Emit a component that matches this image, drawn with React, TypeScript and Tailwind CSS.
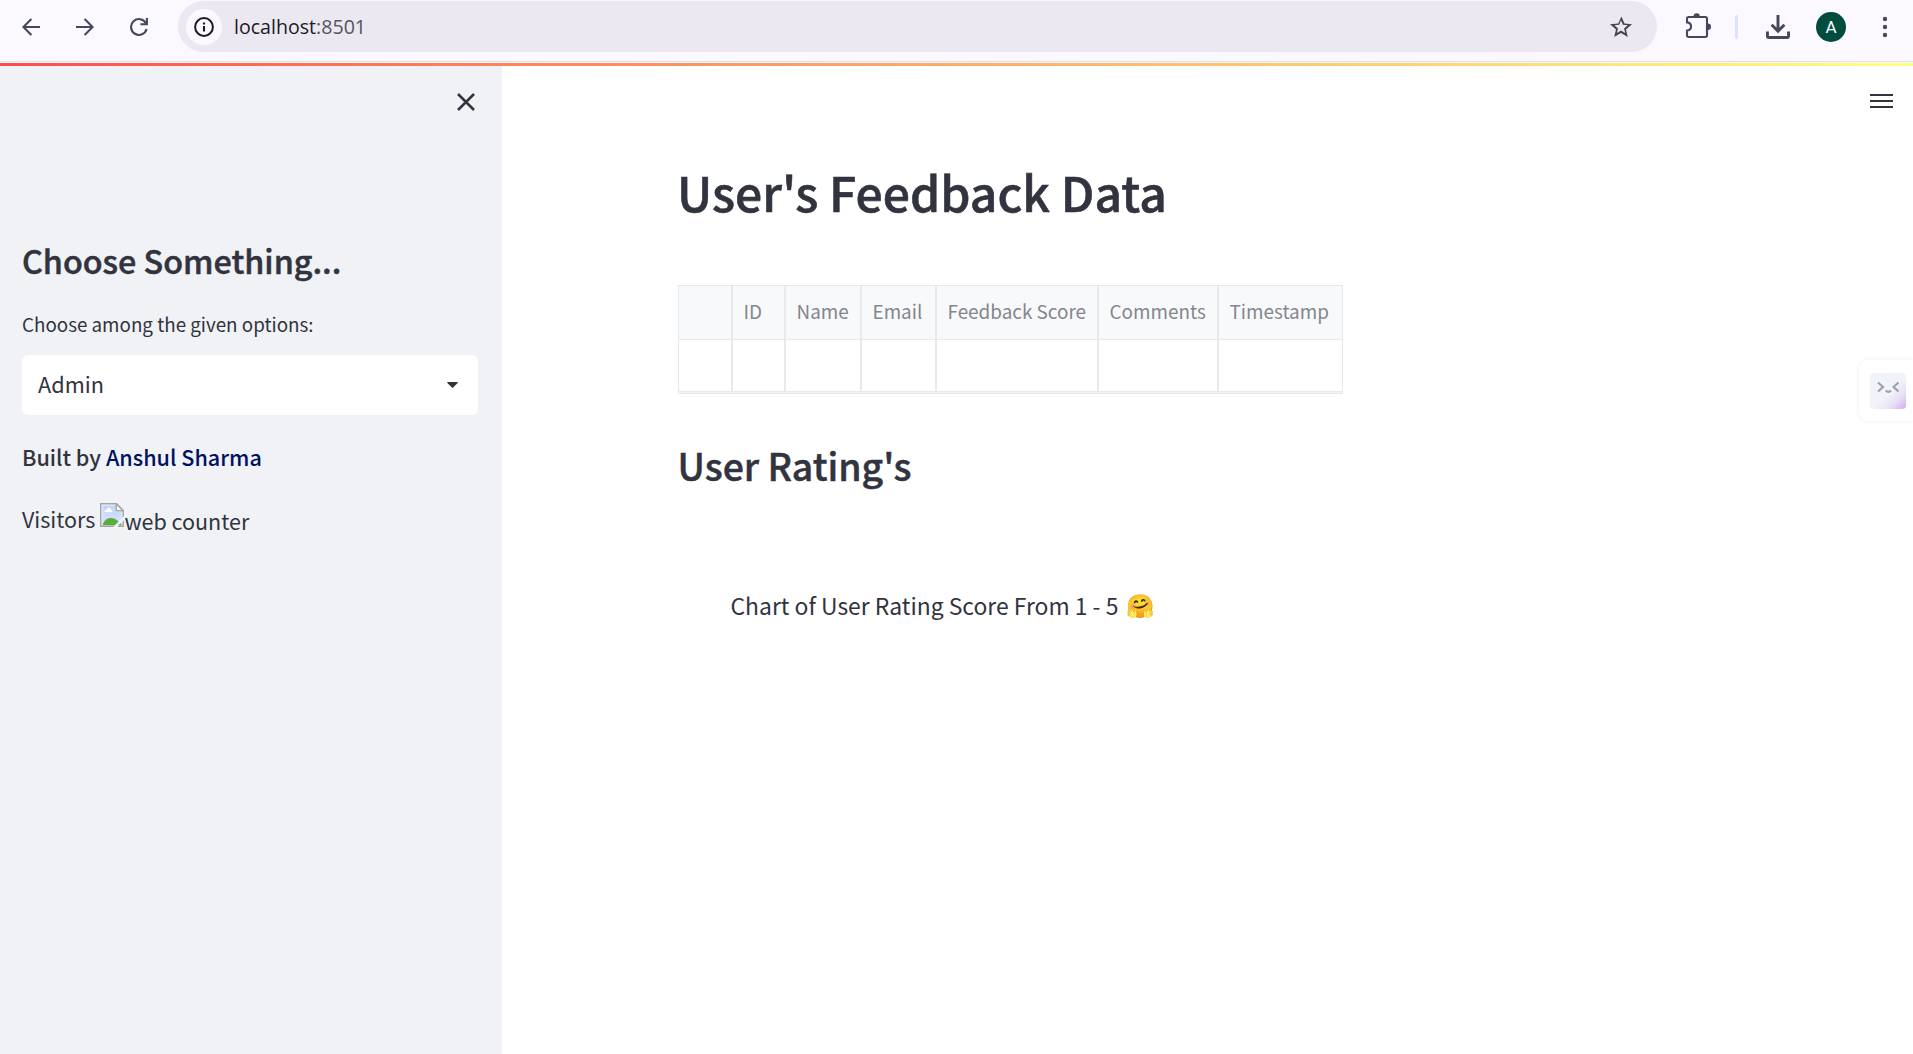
import type { ReactNode } from "react";

const INK = "#46475a";

function BackIcon() {
  return (
    <svg width="18" height="18" viewBox="0 0 18 18" fill="none" stroke={INK} strokeWidth="2.1">
      <path d="M18 9H1.6M9.4 .9 1.4 9l8 8.1" />
    </svg>
  );
}

function ForwardIcon() {
  return (
    <svg width="18" height="18" viewBox="0 0 18 18" fill="none" stroke={INK} strokeWidth="2.1">
      <path d="M0 9h16.4M8.6.9l8 8.1-8 8.1" />
    </svg>
  );
}

function ReloadIcon() {
  return (
    <svg width="18" height="18" viewBox="0 0 18 18" fill="none" stroke={INK} strokeWidth="2.1">
      <path d="M16.6 11a7.9 7.9 0 1 1-.6-5.6" />
      <path d="M16.9 0v6.3h-6.5" />
    </svg>
  );
}

function InfoIcon() {
  return (
    <svg width="20" height="20" viewBox="0 0 20 20" fill="none" stroke="#1d1b22">
      <circle cx="10" cy="10" r="8.9" strokeWidth="2" />
      <path d="M10 9v5.4M10 5.4v2.1" strokeWidth="2.1" />
    </svg>
  );
}

function StarIcon() {
  return (
    <svg width="24" height="24" viewBox="0 0 24 24" fill="#46464c">
      <path d="M23 9.24l-7.5-.65L12.4 1.6 9.3 8.6 1 9.24l6 5.15L5.2 22l6.8-4.1L18.8 22l-1.8-7.61zM12 15.6l-4.1 2.5 1.1-4.7-3.6-3.15 4.8-.4L12 5.4l1.9 4.45 4.8.4-3.6 3.15 1.1 4.7z" />
    </svg>
  );
}

function ExtensionIcon() {
  return (
    <svg width="26" height="26" viewBox="0 0 26 26">
      <path
        d="M3 4h17.3q1.7 0 1.7 1.7v16.6q0 1.7-1.7 1.7H3.7Q2 24 2 22.3V17.6c5.4-.6 5.4-7.6 0-8.2V5.7Q2 4 3.7 4z"
        fill="none"
        stroke={INK}
        strokeWidth="2.1"
      />
      <path d="M8.6 3.4a3.1 3.1 0 0 1 6.2 0zM22.8 10.6a3.2 3.2 0 0 1 0 6.4z" fill={INK} />
    </svg>
  );
}

function DownloadIcon() {
  return (
    <svg width="24" height="24" viewBox="0 0 24 24" fill="none" stroke={INK} strokeWidth="2.9">
      <path d="M12 0v16M5.6 9.7l6.4 6.4 6.4-6.4" />
      <path d="M1.45 16.5v4.6q0 1.45 1.45 1.45h18.2q1.45 0 1.45-1.45v-4.6" />
    </svg>
  );
}

function MoreIcon() {
  return (
    <svg width="6" height="22" viewBox="0 0 6 22" fill={INK}>
      <circle cx="3" cy="3" r="2.2" />
      <circle cx="3" cy="11" r="2.2" />
      <circle cx="3" cy="19" r="2.2" />
    </svg>
  );
}

function BrokenImageIcon() {
  return (
    <svg width="24" height="24" viewBox="0 0 24 24">
      <defs>
        <linearGradient id="sky" x1="0" y1="0" x2="0" y2="1">
          <stop offset="0" stopColor="#c3d5f7" />
          <stop offset="1" stopColor="#d6e3fb" />
        </linearGradient>
      </defs>
      <path d="M.75.75H16.5L23.25 7.5V23.25H.75z" fill="#f4f6fb" stroke="#a3a5a8" strokeWidth="1.5" />
      <path d="M2.5 2.5h13v6.5H21.5v12.5H2.5z" fill="url(#sky)" />
      <path d="M4.5 9c0-2 1.5-2.5 2.3-2.3C7.2 4 10.5 4 10.7 6.5 12 6.5 12.6 8 12 9z" fill="#fff" />
      <path d="M2.5 22.2c1.5-5 4.5-7.2 8.2-7.2 2.5 0 4.5.7 6 2l4.8 4v1.2z" fill="#5aad3c" />
      <path d="M16.2.75V7.8h7z" fill="#fff" stroke="#a3a5a8" strokeWidth="1.5" />
      <path d="M24 13v4.4L18 22.4V24H13.2z" fill="#f0f2f6" />
    </svg>
  );
}

function AssistantFace() {
  return (
    <svg width="36" height="36" viewBox="0 0 36 36" fill="none" stroke="#9ea1ac" strokeWidth="2.2">
      <path d="M8 9.5l5 4.5-5 4.5M28.500 9.5l-5 4.5 5 4.5" />
      <path d="M15.8 17.5q2.6 2.7 5.2 0" />
    </svg>
  );
}

function BrowserBar() {
  return (
    <header className="flex h-[63px] shrink-0 flex-col bg-[#fbf8ff]">
      <div className="flex h-[61px] items-start pt-px">
        <div className="flex h-[52px] w-[178px] items-center gap-9 pl-[22px]">
          <BackIcon />
          <ForwardIcon />
          <ReloadIcon />
        </div>
        <div className="flex h-[51px] w-[1479px] items-center rounded-full bg-[#ebe8f2] pr-[24px] pl-[8px]">
          <div className="flex size-[36px] items-center justify-center rounded-full bg-[#fbf8ff]">
            <InfoIcon />
          </div>
          <div className="ml-[12px] flex-1 font-['Open_Sans',sans-serif] text-[19.6px] leading-[26px] whitespace-nowrap text-[#1d1b22]">
            localhost<span className="text-[#56545c]">:8501</span>
          </div>
          <StarIcon />
        </div>
        <div className="flex h-[52px] flex-1 items-center">
          <div className="ml-[28px] flex -translate-y-px">
            <ExtensionIcon />
          </div>
          <div className="ml-[24px] h-[24px] w-[3px] rounded-full bg-[#dfe0ff]" />
          <div className="ml-[28px]">
            <DownloadIcon />
          </div>
          <div className="ml-[26px] flex size-[30px] items-center justify-center rounded-full bg-[#004d40] font-['Roboto',sans-serif] text-[17px] leading-none text-white">
            A
          </div>
          <div className="ml-[36px]">
            <MoreIcon />
          </div>
        </div>
      </div>
      <div className="h-px bg-[#dfdfea]" />
      <div className="h-px bg-[#fbfaff]" />
    </header>
  );
}

function Sidebar() {
  return (
    <aside className="flex w-[502px] shrink-0 flex-col bg-[#f0f2f6] pr-[24px] pl-[22px]">
      <div className="flex h-[174px] justify-end pt-[27px] pr-[3px]">
        <svg width="18" height="18" viewBox="0 0 18 18" fill="none" stroke="#31333f" strokeWidth="2.5">
          <path d="M1 1l16 16M17 1L1 17" />
        </svg>
      </div>
      <h2 className="text-[32.3px] leading-[40px] font-medium whitespace-nowrap [-webkit-text-stroke:0.5px_#31333f]">
        Choose Something...
      </h2>
      <div className="mt-[30px] text-[18.8px] leading-[28px]">Choose among the given options:</div>
      <div className="mt-[17px] flex h-[60px] items-center justify-between rounded-[6px] bg-white pr-[20px] pl-[16px]">
        <span className="-mt-[3px] text-[21.7px] leading-[32px]">Admin</span>
        <svg width="11" height="6" viewBox="0 0 11 6" fill="#31333f">
          <path d="M.6 0h9.8q.7.3.2.9L6.1 5.6q-.6.5-1.2 0L.4.9Q-.1.3.6 0z" />
        </svg>
      </div>
      <p className="mt-[26px] text-[21.6px] leading-[32px] font-medium">
        Built by <span className="text-[#001161]">Anshul Sharma</span>
      </p>
      <p className="mt-[30px] flex text-[21.5px] leading-[32px]">
        Visitors
        <span className="ml-[5px] flex items-start pt-[2px]">
          <span className="-mt-[2px]">
            <BrokenImageIcon />
          </span>
          web counter
        </span>
      </p>
    </aside>
  );
}

function HeadCell({ width, children }: { width: string; children?: ReactNode }) {
  return (
    <th
      className={`${width} h-[54px] border-r-2 border-b border-[#e8e9eb] bg-[#f8f9fb] pb-[3px] pl-[10.5px] text-left font-normal last:border-r-0`}
    >
      {children}
    </th>
  );
}

function FeedbackTable() {
  const columns: [string, string][] = [
    ["", "w-[54px]"],
    ["ID", "w-[53px]"],
    ["Name", "w-[76px]"],
    ["Email", "w-[75px]"],
    ["Feedback Score", "w-[162px]"],
    ["Comments", "w-[120px]"],
    ["Timestamp", "w-[123px]"],
  ];
  return (
    <table className="mt-[64px] ml-px w-[665px] table-fixed border-separate border-spacing-0 border border-[#e6e7e9] text-[18.9px] leading-[28px] whitespace-nowrap text-[#84868e]">
      <thead>
        <tr>
          {columns.map(([label, width]) => (
            <HeadCell key={width} width={width}>
              {label}
            </HeadCell>
          ))}
        </tr>
      </thead>
      <tbody>
        <tr>
          {columns.map(([, width]) => (
            <td key={width} className="h-[52px] border-r-2 border-b border-[#e8e9eb] last:border-r-0" />
          ))}
        </tr>
        <tr>
          <td colSpan={7} className="h-px bg-[#f4f5f6] p-0" />
        </tr>
      </tbody>
    </table>
  );
}

function MainPanel() {
  return (
    <main className="flex flex-1 justify-between bg-white">
      <div className="flex flex-col items-start pt-[95px] pl-[175px]">
        <h1 className="text-[48.1px] leading-[60px] font-medium whitespace-nowrap [-webkit-text-stroke:0.6px_#31333f]">
          User&apos;s Feedback Data
        </h1>
        <FeedbackTable />
        <h2 className="mt-[47px] ml-[0.5px] text-[37.4px] leading-[48px] font-medium [-webkit-text-stroke:0.5px_#31333f]">
          User Rating&apos;s
        </h2>
        <p className="mt-[100px] ml-[53.5px] flex text-[22.9px] leading-[32px] whitespace-nowrap">
          Chart of User Rating Score From 1 - 5
          <span className="ml-[8px] pt-[2px] font-['Noto_Color_Emoji','Noto_Sans_CJK_SC',sans-serif]">🤗</span>
        </p>
      </div>
      <div className="flex w-[54px] flex-col items-end">
        <div className="mt-[28px] mr-[20px] flex w-[23px] flex-col gap-[4px] pb-[1px]">
          <div className="h-[2px] bg-[#31333f]" />
          <div className="h-[2px] bg-[#31333f]" />
          <div className="h-[2px] bg-[#31333f]" />
        </div>
        <div className="mt-[251px] flex h-[61px] w-[54px] items-center rounded-l-[9px] bg-white pl-[11px] shadow-[0_0_5px_rgba(0,0,0,0.07)]">
          <div className="size-[36px] rounded-[4px] bg-[linear-gradient(135deg,#f0f4f8_0%,#f1f3f8_55%,#e8dcf6_78%,#cfa9ee_100%)]">
            <AssistantFace />
          </div>
        </div>
      </div>
    </main>
  );
}

export default function App() {
  return (
    <div className="flex h-[1054px] w-[1913px] flex-col overflow-hidden bg-white font-['Noto_Sans_CJK_SC',sans-serif] text-[#31333f]">
      <BrowserBar />
      <div className="h-[3px] shrink-0 bg-linear-to-r from-[#ff4b4b] to-[#fffd80]" />
      <div className="flex flex-1">
        <Sidebar />
        <MainPanel />
      </div>
    </div>
  );
}
